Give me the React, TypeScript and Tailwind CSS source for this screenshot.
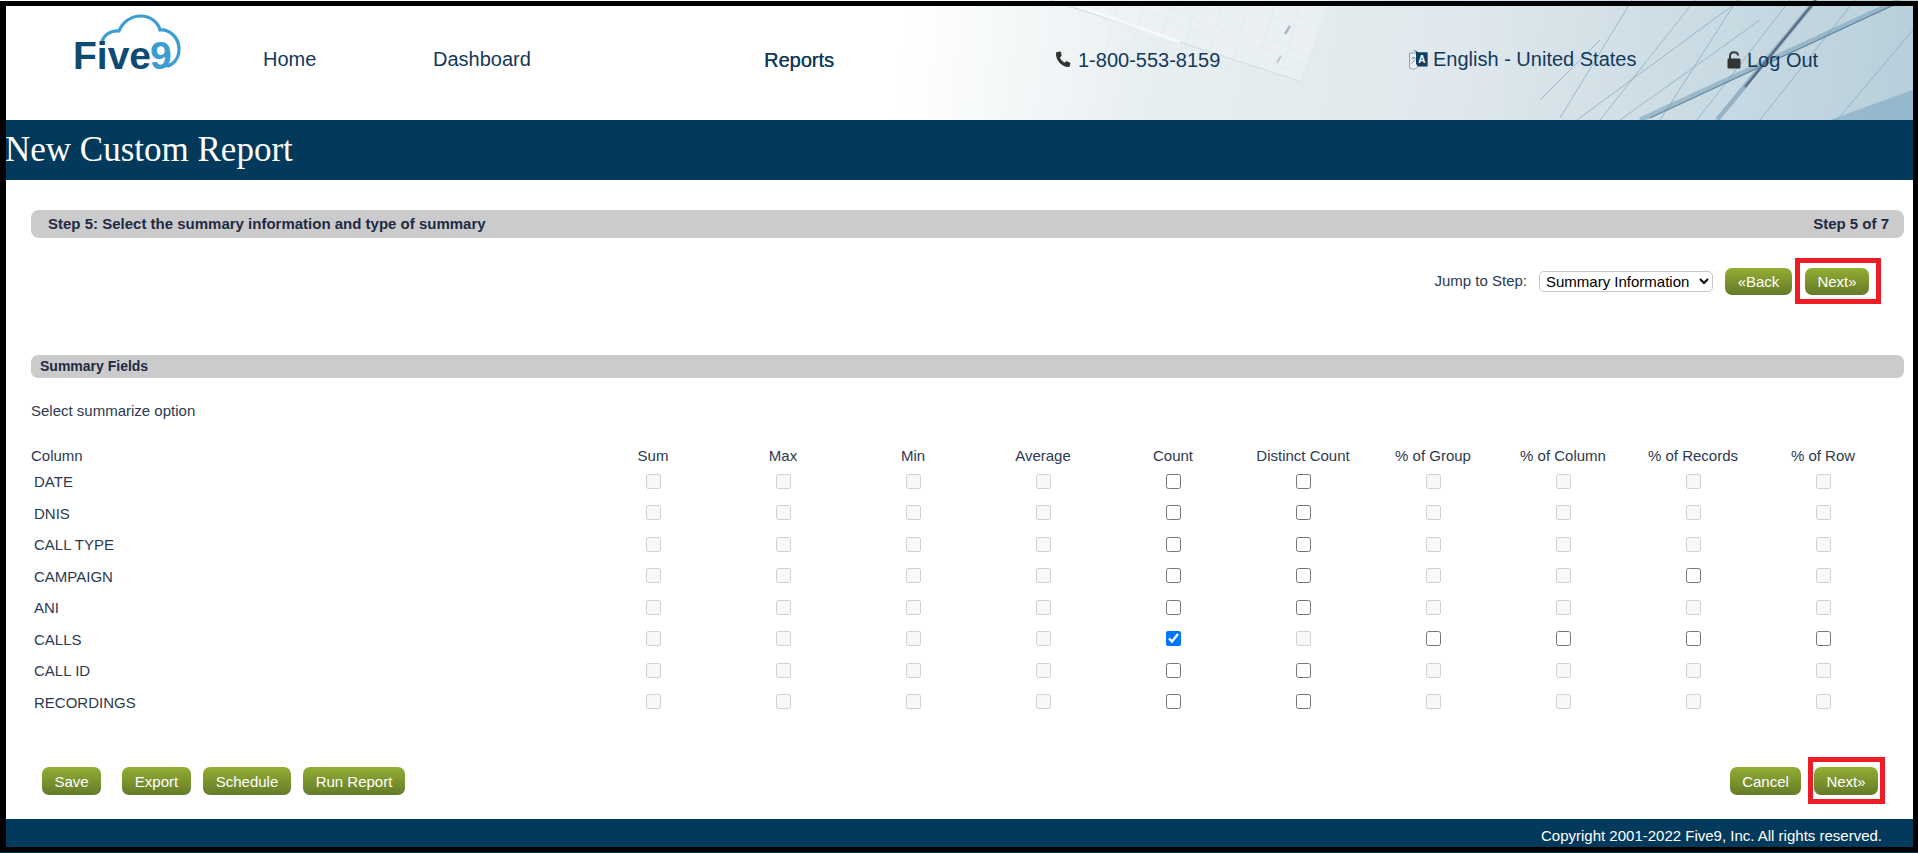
import React from "react";

const columns = ["Sum", "Max", "Min", "Average", "Count", "Distinct Count", "% of Group", "% of Column", "% of Records", "% of Row"];
const rows = ["DATE", "DNIS", "CALL TYPE", "CAMPAIGN", "ANI", "CALLS", "CALL ID", "RECORDINGS"];

function enabled(row: string, col: string) {
  if (col === "Count") return true;
  if (col === "Distinct Count") return row !== "CALLS";
  if (col === "% of Records") return row === "CALLS" || row === "CAMPAIGN";
  if (col === "% of Group" || col === "% of Column" || col === "% of Row") return row === "CALLS";
  return false;
}

function Logo() {
  return (
    <svg viewBox="0 0 115 72" className="w-[115px] h-[72px] self-start mt-[14px] ml-[70px] shrink-0 overflow-visible">
      <path
        d="M32 28 C34 20 42 16 49 17 C53 7 62 2 71 2 C80 2 88 8 90 16 C100 15 109 24 109 35 C109 44 104 50 98 52"
        fill="none"
        stroke="#3b9dd2"
        strokeWidth="3.2"
        strokeLinecap="round"
      />
      <text x="3" y="55" fontFamily="Liberation Sans, sans-serif" fontWeight="700" fontSize="39" fill="#0f4a73">
        Five
      </text>
      <text x="80" y="55" fontFamily="Liberation Sans, sans-serif" fontWeight="700" fontSize="39" fill="#3b9dd2">
        9
      </text>
    </svg>
  );
}

function HeaderArt() {
  const thin: [number, number, number, number][] = [
    [1577, 120, 1740, 0],
    [1560, 118, 1632, 0],
    [1600, 120, 1695, 0],
    [1660, 120, 1737, 0],
    [1697, 120, 1790, 0],
    [1760, 120, 1855, 0],
    [1837, 120, 1918, 24],
    [1540, 100, 1600, 40],
    [1620, 120, 1760, 20],
  ];
  return (
    <svg viewBox="0 0 1918 120" className="absolute inset-0 w-[1918px] h-[120px]" aria-hidden="true">
      <polygon points="1050,0 1332,0 1299,81 1180,42" fill="#eef3f5" opacity="0.6" />
      {Array.from({ length: 9 }).map((_, i) => (
        <line key={`g${i}`} x1={1120 + i * 26} y1={0} x2={1100 + i * 26} y2={70} stroke="#dbe5e9" strokeWidth="0.6" />
      ))}
      {Array.from({ length: 7 }).map((_, i) => (
        <line key={`h${i}`} x1={1120 + i * 30} y1={0} x2={1310} y2={78 - i * 11} stroke="#dfe7ea" strokeWidth="0.6" />
      ))}
      <line x1="1050" y1="0" x2="1299" y2="81" stroke="#d3dfe4" strokeWidth="1.2" />
      <line x1="1060" y1="0" x2="1180" y2="42" stroke="#f6f9fa" strokeWidth="3" />
      <line x1="1285" y1="34" x2="1290" y2="26" stroke="#a9bac4" strokeWidth="2.5" />
      <line x1="1277" y1="63" x2="1281" y2="56" stroke="#bccbd3" strokeWidth="2" />
      <polygon points="1830,120 1918,88 1918,120" fill="#86aec6" opacity="0.7" />
      {thin.map(([a, b, c, d], i) => (
        <line key={i} x1={a} y1={b} x2={c} y2={d} stroke="#7ea6bd" strokeWidth="0.9" opacity="0.75" />
      ))}
      <line x1="1640" y1="120" x2="1900" y2="0" stroke="#7fa4bc" strokeWidth="5" opacity="0.6" />
      <line x1="1650" y1="118" x2="1900" y2="2" stroke="#466f8e" strokeWidth="1.2" opacity="0.7" />
      <line x1="1717" y1="120" x2="1816" y2="0" stroke="#7da0b8" strokeWidth="4.5" opacity="0.65" />
      <line x1="1745" y1="87" x2="1816" y2="0" stroke="#4a5a78" strokeWidth="2.2" opacity="0.8" />
    </svg>
  );
}

function LanguageIcon() {
  return (
    <svg viewBox="0 0 19 21" className="w-[19px] h-[21px] shrink-0 mr-[5px]" aria-hidden="true">
      <path d="M.6 4 H9 V17 C8 19.5 5 20.6 3 20 L.6 19 Z" fill="#eef2f4" stroke="#8f9da6" strokeWidth="1" />
      <path d="M2.5 9 H6.5 M4.5 7.8 V10 M2.5 14.5 L6.5 10.5" stroke="#76848d" strokeWidth="0.9" fill="none" />
      <path d="M4 .6 L9.5 3.2 H18.6 V17.5 H9 L7 15 V3 Z" fill="#0f3f63" />
      <text x="9.2" y="14.4" fontFamily="Liberation Sans, sans-serif" fontWeight="700" fontSize="10" fill="#ffffff">
        A
      </text>
    </svg>
  );
}

function PhoneIcon() {
  return (
    <svg viewBox="0 0 16 17" className="w-[16px] h-[17px] shrink-0 mr-[7px]" aria-hidden="true">
      <path
        d="M2.2 1 L5 .6 C5.6 .6 6 1 6.1 1.5 L6.6 4.4 C6.6 4.9 6.4 5.2 6 5.5 L4.9 6.2 C5.6 8.4 7.6 10.7 9.7 11.7 L10.6 10.6 C10.9 10.2 11.4 10.1 11.8 10.2 L14.7 11.4 C15.2 11.6 15.5 12 15.4 12.5 L14.8 14.9 C14.6 15.6 14.1 16 13.4 16 C6.6 15.8 .9 9.4 .9 2.5 C.9 1.7 1.4 1.2 2.2 1 Z"
        fill="#333333"
      />
    </svg>
  );
}

function LockIcon() {
  return (
    <svg viewBox="0 0 14 18" className="w-[14px] h-[18px] shrink-0 mr-[6px]" aria-hidden="true">
      <path d="M3 8 V5 C3 2.4 4.8 1.2 7 1.2 C9.2 1.2 11 2.4 11 4.6" fill="none" stroke="#3a3a3a" strokeWidth="2" />
      <rect x="0.5" y="7.5" width="13" height="10" rx="1.2" fill="#333333" />
    </svg>
  );
}

function GreenButton({ children, className }: { children: React.ReactNode; className: string }) {
  return (
    <button
      type="button"
      className={`rounded-[7px] bg-[linear-gradient(#93ae32,#657a2a)] text-white text-[15px] leading-none ${className}`}
    >
      {children}
    </button>
  );
}

function RedBox({ className }: { className: string }) {
  return <span className={`absolute border-[5px] border-[#ee1c25] pointer-events-none ${className}`} />;
}

export default function App() {
  return (
    <div className="relative w-[1918px] h-[853px] overflow-hidden bg-white flex flex-col font-['Liberation_Sans',Arial,sans-serif] text-[15px] text-[#2b3a50]">
      <header className="relative h-[120px] shrink-0 bg-[linear-gradient(98deg,#ffffff_47%,#e8eff1_60%,#dfe8ec_76%,#b7cfdb_100%)]">
        <HeaderArt />
        <div className="relative flex h-full items-center text-[20px] text-[#12395b]">
          <Logo />
          <a className="ml-[78px] w-[170px] shrink-0 -mt-[2px]">Home</a>
          <a className="w-[331px] shrink-0 -mt-[2px]">Dashboard</a>
          <a className="w-[291px] shrink-0 -mt-[1px] [text-shadow:0.3px_0_0_#12395b]">Reports</a>
          <div className="w-[354px] shrink-0 flex items-center -mt-[1px]">
            <PhoneIcon />
            1-800-553-8159
          </div>
          <div className="w-[318px] shrink-0 flex items-center -mt-[2px]">
            <LanguageIcon />
            English - United States
          </div>
          <div className="flex items-center -mt-[1px]">
            <LockIcon />
            Log Out
          </div>
        </div>
      </header>

      <div className="h-[60px] shrink-0 bg-[#033a5c] pl-[5px] pb-[2px] flex items-center">
        <h1 className="font-['Liberation_Serif',serif] text-[35px] leading-none text-white">New Custom Report</h1>
      </div>

      <main className="flex-1 pl-[31px] pr-[14px] flex flex-col">
        <div className="mt-[30px] h-[28px] rounded-[8px] bg-[#cbcbcb] pl-[17px] pr-[15px] flex items-center justify-between font-bold text-[15px] text-[#1f2a44]">
          <span>Step 5: Select the summary information and type of summary</span>
          <span>Step 5 of 7</span>
        </div>

        <div className="mt-[30px] h-[27px] pr-[35px] flex items-center justify-end">
          <span>Jump to Step:</span>
          <select className="ml-[12px] w-[174px] h-[21px] rounded-[5px] border border-[#c6c6c6] bg-white pl-[2px] text-[15px] text-black">
            <option>Summary Information</option>
          </select>
          <GreenButton className="ml-[12px] w-[67px] h-[27px]">«Back</GreenButton>
          <span className="relative ml-[13px] flex">
            <GreenButton className="w-[64px] h-[27px]">Next»</GreenButton>
            <RedBox className="-left-[10px] -right-[12px] -top-[10px] -bottom-[9px]" />
          </span>
        </div>

        <div className="mt-[60px] h-[23px] rounded-[7px] bg-[#cbcbcb] pl-[9px] flex items-center font-bold text-[14px] text-[#1f2a44]">
          Summary Fields
        </div>

        <p className="mt-[22px] h-[22px] leading-[22px]">Select summarize option</p>

        <div className="mt-[24.75px] grid grid-cols-[557px_repeat(10,130px)] grid-rows-[18.5px_repeat(8,31.5px)] items-center">
          <div>Column</div>
          {columns.map((c) => (
            <div key={c} className="text-center">
              {c}
            </div>
          ))}
          {rows.map((r) => (
            <React.Fragment key={r}>
              <div className="pl-[3px] pt-[3px]">{r}</div>
              {columns.map((c) => (
                <div key={c} className="flex justify-center">
                  <input
                    type="checkbox"
                    disabled={!enabled(r, c)}
                    defaultChecked={r === "CALLS" && c === "Count"}
                    className="m-0 w-[15px] h-[15px]"
                  />
                </div>
              ))}
            </React.Fragment>
          ))}
        </div>

        <div className="mt-[49.75px] pl-[11px] pr-[26px] flex items-center">
          <GreenButton className="w-[59px] h-[28px]">Save</GreenButton>
          <GreenButton className="ml-[21px] w-[69px] h-[28px]">Export</GreenButton>
          <GreenButton className="ml-[12px] w-[88px] h-[28px]">Schedule</GreenButton>
          <GreenButton className="ml-[12px] w-[102px] h-[28px]">Run Report</GreenButton>
          <GreenButton className="ml-auto w-[71px] h-[28px]">Cancel</GreenButton>
          <span className="relative ml-[13px] flex">
            <GreenButton className="w-[64px] h-[28px]">Next»</GreenButton>
            <RedBox className="-left-[6px] -right-[7px] -top-[10px] -bottom-[9px]" />
          </span>
        </div>
      </main>

      <footer className="h-[34px] shrink-0 bg-[#033a5c] pr-[36px] flex items-center justify-end text-white text-[15px]">
        Copyright 2001-2022 Five9, Inc. All rights reserved.
      </footer>

      <div className="absolute left-0 top-[1px] w-[1918px] h-[851px] border-[5px] border-l-[6px] border-black pointer-events-none" />
    </div>
  );
}
